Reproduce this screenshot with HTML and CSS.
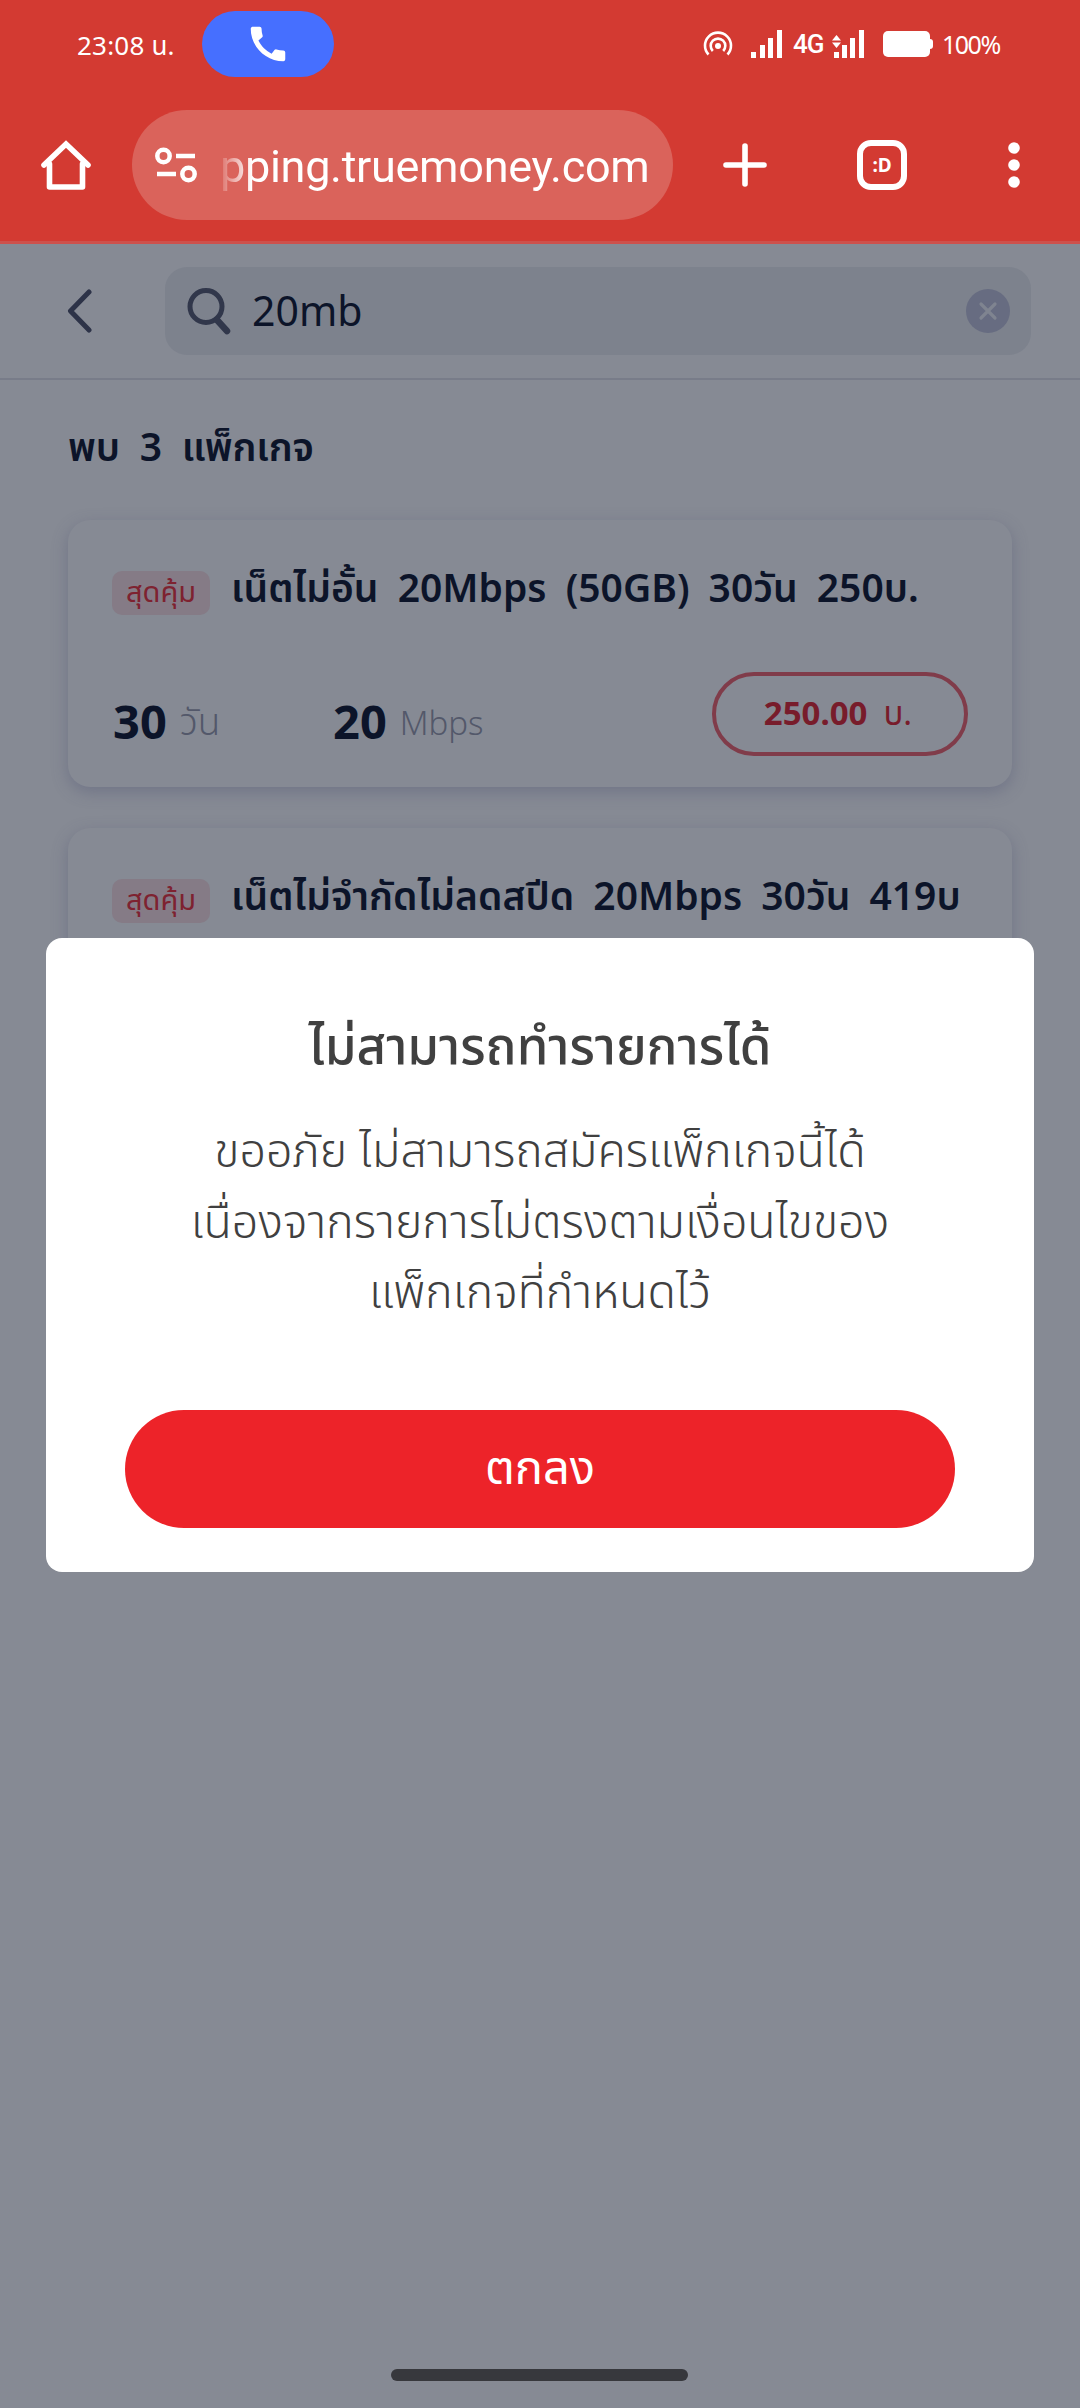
FILE: index.html
```
<!DOCTYPE html>
<html lang="th">
<head>
  <meta charset="UTF-8">
  <title>พบ 3 แพ็กเกจ</title>
  <link rel="stylesheet" href="styles.css">
</head>
<body>
  <div class="status-bar">
    <span class="time">23:08 น.</span>
    <div class="call-pill">
      <svg width="46" height="46" viewBox="0 0 24 24"><path fill="#fff" d="M20.01 15.38c-1.23 0-2.42-.2-3.53-.56a.98.98 0 0 0-1.01.24l-1.57 1.97c-2.83-1.35-5.48-3.9-6.89-6.83l1.95-1.66c.27-.28.35-.67.24-1.02-.37-1.11-.56-2.3-.56-3.53 0-.54-.45-.99-.99-.99H4.19C3.65 3 3 3.24 3 3.99 3 13.28 10.73 21 20.01 21c.71 0 .99-.63.99-1.18v-3.45c0-.54-.45-.99-.99-.99z"/></svg>
    </div>
    <div class="status-icons">
      <svg class="hotspot" width="30" height="26" viewBox="0 0 30 26">
        <g fill="none" stroke="#fff" stroke-width="2.6">
          <path d="M5.5 23.5A13 13 0 1 1 24.5 23.5"/>
          <path d="M9.8 20A7.3 7.3 0 1 1 20.2 20"/>
        </g>
        <circle cx="15" cy="15" r="3" fill="#fff"/>
      </svg>
      <svg class="signal" width="32" height="28" viewBox="0 0 32 28" fill="#fff">
        <path d="M0 22h5v6H0zM9 15h5v13H9zM17 8h5v20h-5zM26 0h5v28h-5z"/>
      </svg>
      <span class="net">4G</span>
      <svg class="signal-two" width="33" height="28" viewBox="0 0 33 28" fill="#fff">
        <path d="M2 22h5v6H2zM10 15h5v13h-5zM18 8h5v20h-5zM27 0h5v28h-5z"/>
        <path d="M4.500 5L9 10.500H0zM0 12.500h9L4.500 18z"/>
      </svg>
      <svg class="battery" width="50" height="26" viewBox="0 0 50 26" fill="#fff">
        <rect width="47" height="26" rx="5"/>
        <rect x="44" y="8" width="6" height="10" rx="3"/>
      </svg>
      <span class="percent">100%</span>
    </div>
  </div>

  <div class="toolbar">
    <svg class="home" width="50" height="50" viewBox="0 0 50 50" fill="none" stroke="#fff" stroke-width="5.600" stroke-linejoin="round" stroke-linecap="round">
      <path stroke-linejoin="miter" d="M3 25L25 4L47 25"/>
      <path d="M8.500 24v23h33V24"/>
    </svg>
    <div class="url-bar">
      <svg width="42" height="36" viewBox="0 0 42 36" fill="none" stroke="#fff" stroke-width="4.500">
        <circle cx="8.500" cy="9" r="6.200"/>
        <path d="M21 9h19M2 27h19"/>
        <circle cx="33.500" cy="27" r="6.200"/>
      </svg>
      <span class="url">pping.truemoney.com</span>
    </div>
    <svg class="plus" width="44" height="44" viewBox="0 0 44 44" stroke="#fff" stroke-width="5.600" stroke-linecap="round"><path d="M22 3v38M3 22h38"/></svg>
    <div class="tabs">:D</div>
    <svg class="more" width="12" height="46" viewBox="0 0 12 46" fill="#fff"><circle cx="6" cy="6" r="5.800"/><circle cx="6" cy="23" r="5.800"/><circle cx="6" cy="40" r="5.800"/></svg>
  </div>

  <div class="search-header">
    <svg class="back" width="26" height="44" viewBox="0 0 26 44" fill="none" stroke="#2d3348" stroke-width="5" stroke-linecap="round" stroke-linejoin="round"><path d="M22 3L3.500 22L22 41"/></svg>
    <div class="search-box">
      <svg width="46" height="48" viewBox="0 0 46 48" fill="none" stroke="#31374b" stroke-width="5" stroke-linecap="round"><circle cx="19" cy="19.500" r="16"/><path stroke-width="6.500" d="M30 33L40 44"/></svg>
      <span class="query">20mb</span>
      <svg class="clear" width="46" height="46" viewBox="0 0 46 46"><circle cx="23" cy="23" r="22" fill="#676c81"/><path d="M16 16l14 14M30 16L16 30" stroke="#7f8490" stroke-width="3.200" stroke-linecap="round"/></svg>
    </div>
  </div>

  <div class="results">
    <h2>พบ&nbsp; 3&nbsp; แพ็กเกจ</h2>
    <div class="card">
      <div class="card-title">
        <span class="badge">สุดคุ้ม</span>
        <span class="name">เน็ตไม่อั้น&nbsp; 20Mbps&nbsp; (50GB)&nbsp; 30วัน&nbsp; 250บ.</span>
      </div>
      <div class="card-info">
        <div class="amount"><b>30</b><span class="days">วัน</span></div>
        <div class="amount"><b>20</b><span class="speed">Mbps</span></div>
        <div class="price"><b>250.00</b><span>บ.</span></div>
      </div>
    </div>
    <div class="card">
      <div class="card-title">
        <span class="badge">สุดคุ้ม</span>
        <span class="name">เน็ตไม่จำกัดไม่ลดสปีด&nbsp; 20Mbps&nbsp; 30วัน&nbsp; 419บ</span>
      </div>
    </div>
  </div>

  <div class="modal">
    <h3>ไม่สามารถทำรายการได้</h3>
    <p>
      ขออภัย ไม่สามารถสมัครแพ็กเกจนี้ได้<br>
      เนื่องจากรายการไม่ตรงตามเงื่อนไขของ<br>
      แพ็กเกจที่กำหนดไว้
    </p>
    <button class="ok">ตกลง</button>
  </div>

  <div class="nav-handle"></div>
</body>
</html>
```
FILE: styles.css
```
* { box-sizing: border-box; }
body {
  margin: 0;
  width: 1080px;
  height: 2408px;
  position: relative;
  overflow: hidden;
  background: #868a94;
  color: #0c1429;
  font-family: "Noto Sans", "Noto Sans Thai", sans-serif;
  white-space: nowrap;
}
svg { display: block; flex: none; }
h2, h3, p { margin: 0; }

/* phone status bar */
.status-bar {
  display: flex;
  height: 88px;
  padding: 11px 80px 11px 77px;
  background: #d33a32;
  color: #fff;
}
.time { width: 125px; font-size: 26px; line-height: 68px; letter-spacing: 0.2px; }
.call-pill {
  display: flex;
  align-items: center;
  justify-content: center;
  width: 132px;
  height: 66px;
  border-radius: 33px;
  background: #466fff;
}
.status-icons { display: flex; align-items: center; margin-left: auto; height: 66px; }
.signal { margin-left: 18px; }
.net { margin-left: 10px; width: 39px; font-family: Roboto, sans-serif; font-size: 26px; font-weight: 500; letter-spacing: -1px; }
.battery { margin-left: 18px; }
.percent { margin-left: 9px; width: 58px; font-size: 25px; line-height: 68px; letter-spacing: -1.500px; }

/* browser toolbar */
.toolbar {
  display: flex;
  align-items: center;
  height: 156px;
  padding: 1px 60px 0 41px;
  background: #d33a32;
  border-bottom: 3px solid #cd514c;
}
.url-bar {
  display: flex;
  align-items: center;
  width: 541px;
  height: 110px;
  margin-left: 41px;
  padding-left: 23px;
  border-radius: 55px;
  background: #da635b;
}
.url {
  margin-left: 23px;
  padding-top: 2px;
  color: #fff;
  font-family: Roboto, sans-serif;
  font-size: 45px;
  letter-spacing: -0.3px;
  -webkit-mask-image: linear-gradient(to right, rgba(0,0,0,0.1), #000 32px);
  mask-image: linear-gradient(to right, rgba(0,0,0,0.1), #000 32px);
}
.plus { margin-left: 50px; }
.tabs {
  width: 50px;
  height: 50px;
  margin-left: 90px;
  border: 6px solid #fff;
  border-radius: 14px;
  color: #fff;
  font-size: 19px;
  font-weight: bold;
  line-height: 38px;
  text-align: center;
}
.more { margin-left: 101px; }

/* page header */
.search-header {
  display: flex;
  align-items: center;
  height: 136px;
  padding: 0 49px 0 67px;
  border-bottom: 2px solid #787c89;
}
.search-box {
  display: flex;
  align-items: center;
  width: 866px;
  height: 88px;
  margin-left: 72px;
  padding: 0 20px 0 22px;
  border-radius: 22px;
  background: #7d828d;
}
.query { margin-left: 19px; padding-bottom: 3px; font-size: 41px; }
.clear { margin-left: auto; }

/* package list */
.results { padding: 0 68px; }
h2 { height: 140px; padding-top: 31px; font-size: 39px; font-weight: 600; line-height: 70px; letter-spacing: -0.2px; }
.card {
  height: 267px;
  margin-bottom: 41px;
  padding: 0 44px;
  border-radius: 22px;
  background: #868a94;
  box-shadow: 0 5px 16px rgba(80, 85, 115, 0.4);
}
.card-title { display: flex; padding-top: 51px; }
.badge {
  flex: none;
  width: 98px;
  height: 44px;
  border-radius: 10px;
  background: #857b86;
  color: #7e2230;
  font-size: 29px;
  line-height: 40px;
  text-align: center;
}
.name { margin-left: 21px; font-size: 39px; font-weight: 600; line-height: 31px; word-spacing: -0.600px; }
.card-info { display: flex; margin-top: 57px; }
.amount { display: flex; width: 220px; line-height: 98px; }
.amount b { font-size: 47px; margin-left: 1px; }
.amount span { margin-left: 13px; color: #53586a; font-weight: 300; }
.days { font-size: 37px; }
.speed { font-size: 33px; line-height: 101px; }
.price {
  display: flex;
  align-items: baseline;
  justify-content: center;
  gap: 16px;
  width: 256px;
  height: 84px;
  margin-left: auto;
  padding-right: 4px;
  border: 4px solid #803c4a;
  border-radius: 42px;
  color: #781c2b;
  font-size: 33px;
  line-height: 74px;
}

/* error dialog */
.modal {
  position: absolute;
  left: 46px;
  top: 938px;
  width: 988px;
  height: 634px;
  padding: 66px 79px 0;
  border-radius: 16px;
  background: #fff;
  color: #404040;
  text-align: center;
}
h3 { font-size: 51px; font-weight: 500; line-height: 80px; }
p { margin-top: 30px; font-size: 46.500px; font-weight: 300; line-height: 70.500px; }
.ok {
  display: block;
  width: 830px;
  height: 118px;
  margin-top: 84.500px;
  border: 0;
  border-radius: 59px;
  background: #ed2329;
  color: #fff;
  font-family: inherit;
  font-size: 47px;
}

.nav-handle {
  position: absolute;
  left: 391px;
  top: 2369px;
  width: 297px;
  height: 12px;
  border-radius: 6px;
  background: #37383d;
}
```
